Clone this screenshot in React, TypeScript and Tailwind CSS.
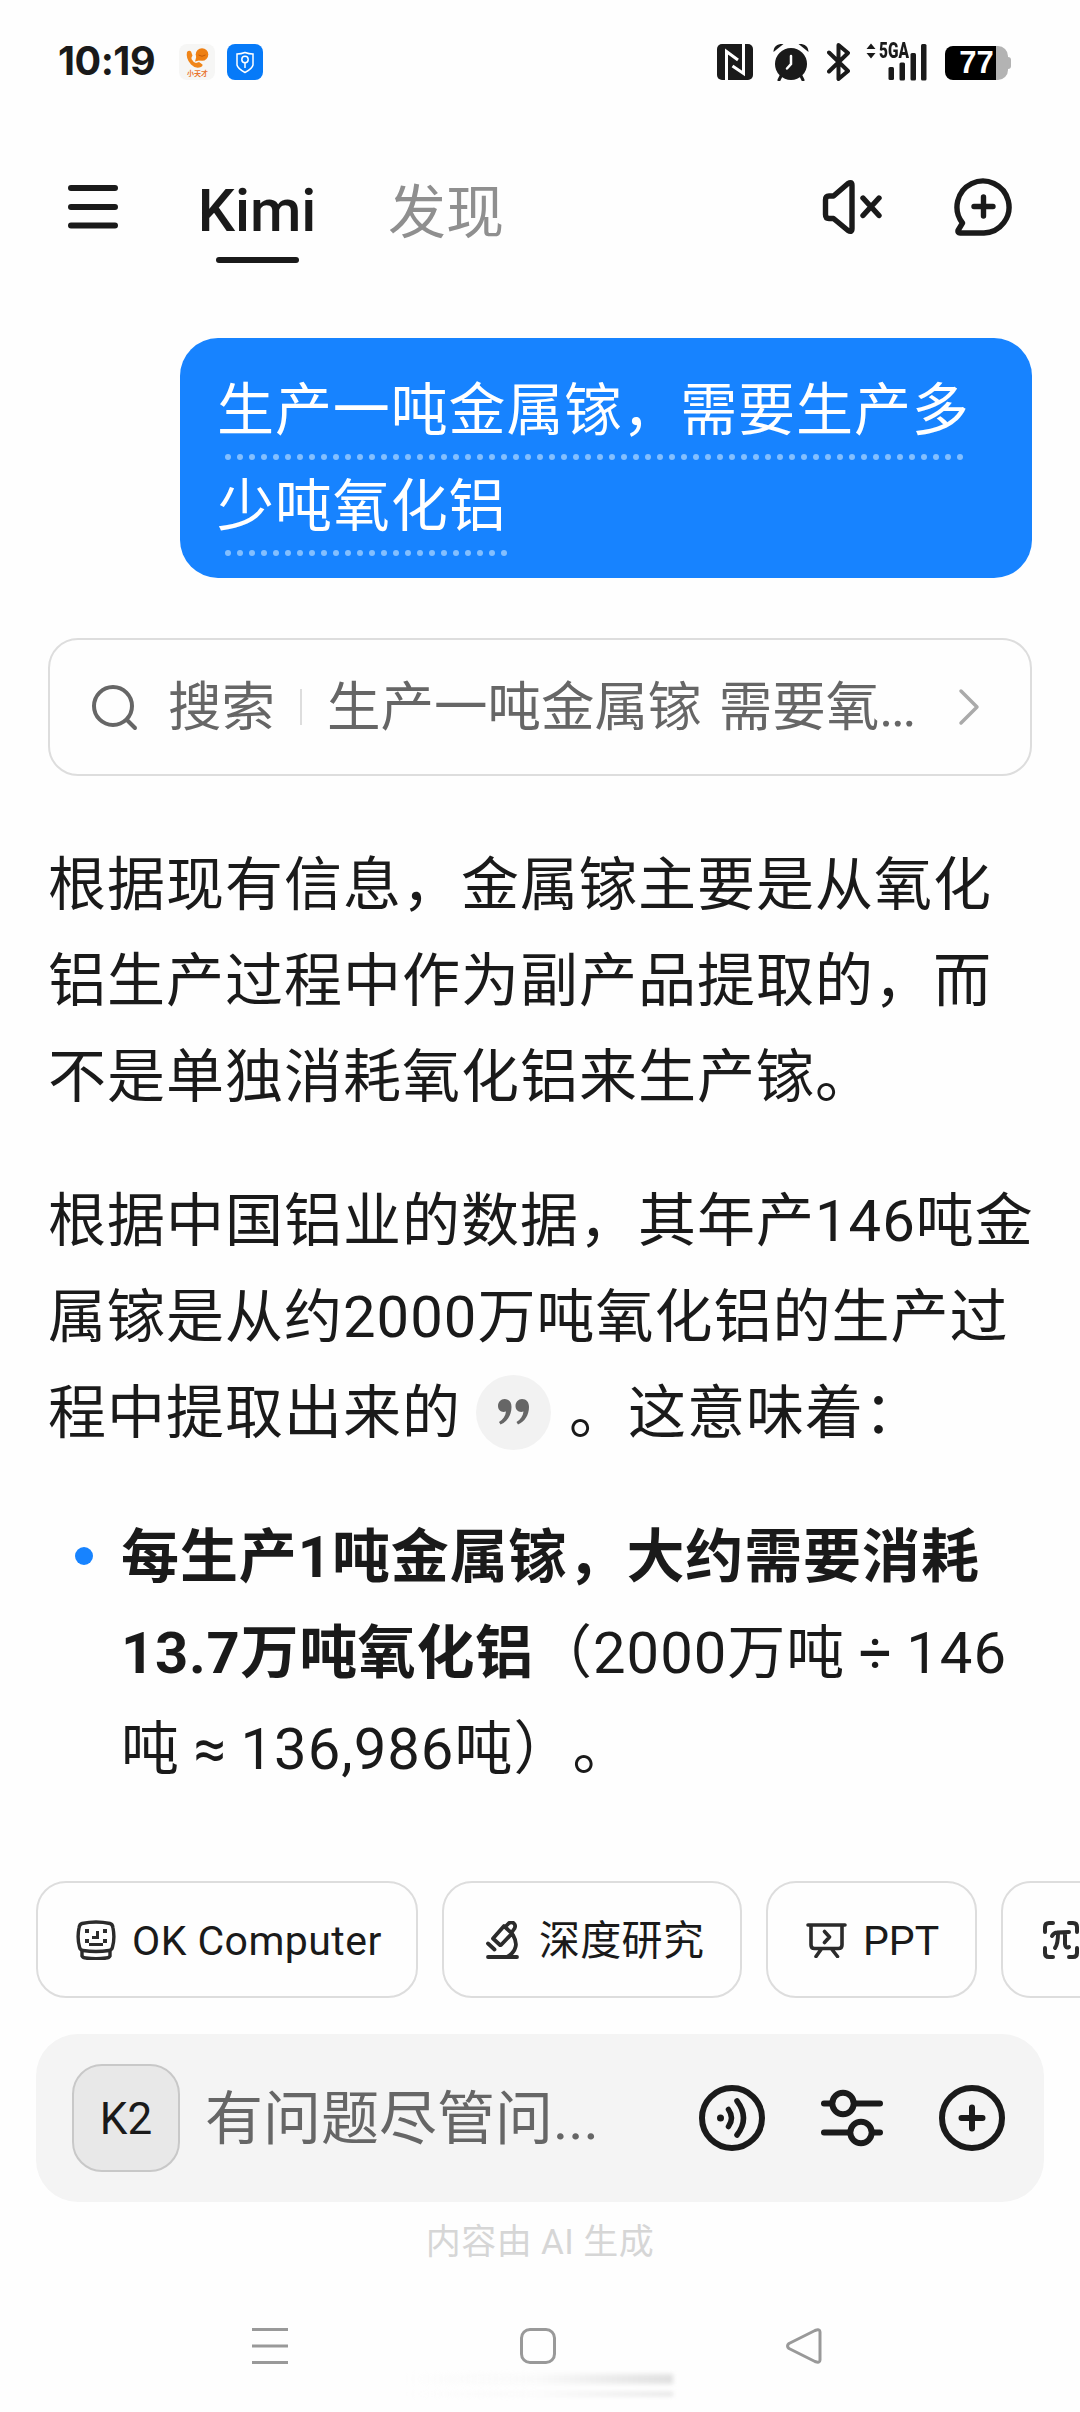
import type { ReactNode } from "react";

const FONT = "font-[Roboto,'Noto_Sans_CJK_SC',sans-serif]";

function Line({ children, className = "" }: { children: ReactNode; className?: string }) {
  return <div className={`flex h-24 items-center whitespace-pre pt-[4px] ${className}`}>{children}</div>;
}

function DotRow({ count }: { count: number }) {
  return (
    <div className="-mt-[4px] ml-[8px] flex h-[4px] items-start gap-[6px]">
      {Array.from({ length: count }, (_, i) => (
        <span key={i} className="mt-px size-[6px] shrink-0 rounded-full bg-[#83bfff]" />
      ))}
    </div>
  );
}

function StatusBar() {
  return (
    <div className="flex h-[124px] items-center pl-[58px] pr-[69px]">
      <span className="w-[121px] font-['Inter'] text-[39.5px] font-bold tracking-[-0.5px] text-[#1a1a1a]">10:19</span>
      <svg className="size-9" viewBox="0 0 36 36">
        <rect width="36" height="36" rx="8" fill="#f6f6f5" />
        <path d="M8 8Q10 6 12 7.500L13.500 11.500Q12 13.500 12.500 15Q14 18 17 19L20 18L23.500 20.500Q24 22 22 23Q17 25.500 12 20.500Q6.500 14.500 8 8Z" fill="#f08519" />
        <circle cx="23" cy="10.500" r="6.300" fill="#ee7f12" />
        <path d="M17.500 12L16 17.500L22 16Z" fill="#ee7f12" />
        <path d="M19.500 11q3.500 2.500 7 0" stroke="#c45c08" fill="none" />
        <text x="8" y="31.500" fontSize="7" fontWeight="700" fill="#e9752f" fontFamily="Noto Sans CJK SC">小天才</text>
      </svg>
      <svg className="ml-3 size-9" viewBox="0 0 36 36" fill="none" stroke="#fff" strokeWidth="1.500">
        <rect width="36" height="36" rx="8" fill="#067af8" stroke="none" />
        <path d="M18 8.500q4 1.500 8 1.500v11q-1 4-8 7.500-7-3.500-8-7.500v-11q4 0 8-1.500z" />
        <circle cx="18" cy="15.500" r="3.200" />
        <path d="M18 19v5" />
      </svg>
      <svg className="ml-auto size-9" viewBox="0 0 36 36" fill="none" stroke="#fff" strokeWidth="3">
        <rect width="36" height="36" rx="5" fill="#1a1a1a" stroke="none" />
        <path d="M9.500 36V7.500l11.500 8.500" />
        <path d="M26.500 0v29.500L15.500 22" />
      </svg>
      <svg className="ml-5 h-[38px] w-9" viewBox="0 0 36 38">
        <circle cx="18" cy="21" r="16" fill="#1a1a1a" />
        <path d="M8 33l-2 4M28 33l2 4" stroke="#1a1a1a" strokeWidth="3" strokeLinecap="round" />
        <path d="M.5 9C.5 3 5 .5 10.500 1zM35.500 9C35.500 3 31 .5 25.500 1z" fill="#1a1a1a" />
        <path d="M18 13v8l-4 4.500" stroke="#fff" strokeWidth="2.500" fill="none" strokeLinecap="round" />
      </svg>
      <svg className="ml-[18px] h-[38px] w-[23px]" viewBox="0 0 23 38" fill="none" stroke="#1a1a1a" strokeWidth="4" strokeLinecap="round" strokeLinejoin="round">
        <path d="M2 9.500l19 18.500-9.500 8V2L21 10 2 28.500" />
      </svg>
      <div className="relative ml-4 h-[38px] w-[63px]">
        <svg className="h-[38px] w-[63px]" viewBox="0 0 63 38" fill="#1a1a1a">
          <path d="M.5 6L5 .5 9.500 6zM.5 10h9L5 15.500z" />
          <rect x="22.500" y="24" width="5.500" height="13" rx="1.500" />
          <rect x="33.500" y="19.500" width="5.500" height="18" rx="1.500" />
          <rect x="44.500" y="10" width="5.500" height="27.500" rx="1.500" />
          <rect x="55" y="1" width="5.500" height="36.500" rx="1.500" />
        </svg>
        <span className="absolute left-[13px] top-[-4px] origin-left scale-x-[0.7] text-[22px] font-black leading-6 text-[#1a1a1a]">5GA</span>
      </div>
      <div className="ml-[16px] flex h-[34px] items-center pt-px">
        <div className="flex h-[34px] w-[51px] items-center justify-center rounded-l-[8px] bg-black pl-3 font-['Liberation_Sans'] text-[31px] font-bold leading-none text-white">77</div>
        <div className="h-[34px] w-3 rounded-r-[10px] bg-[#b3b3b3]" />
        <div className="h-3 w-[3px] rounded-r-[3px] bg-[#b3b3b3]" />
      </div>
    </div>
  );
}

function Header() {
  return (
    <div className="flex h-[166px] items-start pl-[68px] pr-[67px] pt-[54px]">
      <svg className="mt-[7px] h-[44px] w-[50px]" viewBox="0 0 50 44" stroke="#1a1a1a" strokeWidth="6" strokeLinecap="round">
        <path d="M3 3h44M3 22h44M3 40.500h44" />
      </svg>
      <div className="ml-[80px] flex w-[118px] flex-col items-center">
        <span className="h-[79px] text-[59px] font-medium leading-[65px] text-[#1a1a1a]">Kimi</span>
        <span className="h-[6px] w-[83px] rounded-full bg-[#1a1a1a]" />
      </div>
      <span className="ml-[72px] mt-[3px] text-[58px] leading-[64px] text-[#8f8f8f]">发现</span>
      <svg className="ml-auto h-[58px] w-[60px]" viewBox="0 0 60 58" fill="none" stroke="#1a1a1a" strokeWidth="5.400" strokeLinecap="round" strokeLinejoin="round">
        <path d="M3.500 22Q3.500 18 7 18H11.500L26 5.500Q30 3 30 7.500V50.500Q30 55 26 52.500L11.500 40.500H7Q3.500 40.500 3.500 36.500Z" />
        <path d="M41 20l16 17.500M57 20L41 37.500" />
      </svg>
      <svg className="-mt-px ml-[72px] size-[59px]" viewBox="0 0 59 59" fill="none" stroke="#1a1a1a" strokeWidth="5.400" strokeLinecap="round" strokeLinejoin="round">
        <path d="M8.500 46A26 26 0 1 1 30 56H6Q3.500 56 4 53.500Z" />
        <path d="M29.500 20v19M20 29.500h19" />
      </svg>
    </div>
  );
}

function Chip({ icon, label, className }: { icon: ReactNode; label?: string; className: string }) {
  return (
    <div className={`flex h-[117px] shrink-0 items-center rounded-[30px] border-2 border-[#dddddd] text-[41px] text-[#1a1a1a] ${className}`}>
      {icon}
      {label && <span className="whitespace-nowrap pt-[5px]">{label}</span>}
    </div>
  );
}

const ink = { fill: "none", stroke: "#2b2b2b", strokeWidth: 3.4, strokeLinecap: "round", strokeLinejoin: "round" } as const;

function Chips() {
  return (
    <div className="flex gap-6 overflow-hidden pl-9">
      <Chip
        className="w-[382px] pl-[38px] tracking-[0.45px]"
        label="OK Computer"
        icon={
          <svg className="mr-4 h-10 w-10" viewBox="0 0 40 40" {...ink}>
            <path d="M6 3.500Q20 .5 34 3.500Q36.500 4 37 8Q39 18 36.500 27Q36 30 33 30.500Q20 32.500 7 30.500Q4 30 3.500 27Q1 18 3 8Q3.500 4 6 3.500Z" />
            <path d="M6 31V36Q7 38 10 38Q20 39.500 30 38Q33 38 34 36V31" />
            <path d="M9 9h4v4H9zM27 9h4v4h-4zM20 11h3v8h-7v-3h4zM9 19h4v4H9zM27 19h4v4h-4zM13 23h14v3H13z" fill="#2b2b2b" stroke="none" />
          </svg>
        }
      />
      <Chip
        className="w-[300px] pl-[42px] tracking-[0.3px]"
        label="深度研究"
        icon={
          <svg className="mr-[20px] h-[38px] w-[33px]" viewBox="0 0 33 38" {...ink} strokeWidth={3.8}>
            <path d="M2 36h29M2 22.500l6.500 6M14 24l-7-6.500L18 5l8 7.500L15 24zM20 5l3-3q3-1.500 5 .5t.5 5L26 11M27 14q4 7 2.500 12-1.500 6-8.500 10" />
          </svg>
        }
      />
      <Chip
        className="w-[211px] pl-[38px]"
        label="PPT"
        icon={
          <svg className="mr-[16px] h-[36px] w-[41px]" viewBox="0 0 41 36" {...ink} strokeWidth={3.6}>
            <path d="M2 3h37M5 4v19q0 3.500 3.500 3.500h24Q36 26.500 36 23V4M15 27.500l-5 7M26 27.500l5.500 7M18.500 9.500l5 5.500-5 5.500" />
          </svg>
        }
      />
      <Chip
        className="w-[300px] pl-[40px]"
        icon={
          <svg className="h-[38px] w-9" viewBox="0 0 36 38" {...ink} strokeWidth={4}>
            <path d="M2 11V6q0-4 4-4h4M26 2h4q4 0 4 4v5M2 27v5q0 4 4 4h4M26 36h4q4 0 4-4v-5" />
            <path d="M9 15q2-3.500 5-3.500L26 11M15 12q0 11-3 15M22 12v11q.5 5 4 3" />
          </svg>
        }
      />
    </div>
  );
}

function Composer() {
  return (
    <div className="mx-9 mt-9 flex h-[168px] items-center rounded-[42px] bg-[#f4f4f4] pl-9 pr-[39px]">
      <div className="flex size-[108px] items-center justify-center rounded-[30px] border-2 border-[#c8c8c8] bg-[#e8e8e8] pt-[2px] text-[44px] text-[#1a1a1a]">K2</div>
      <span className="ml-[25px] pt-[3px] text-[58px] text-[#666666]">有问题尽管问...</span>
      <svg className="ml-auto size-[66px]" viewBox="0 0 66 66" fill="none" stroke="#1a1a1a" strokeWidth="6" strokeLinecap="round">
        <circle cx="33" cy="33" r="30" />
        <circle cx="21.500" cy="33" r="3.500" fill="#1a1a1a" stroke="none" />
        <path d="M29.500 24.500q6 8.500 0 17M38 16q13 17 0 34" strokeWidth="5.500" />
      </svg>
      <svg className="ml-[55px] h-[58px] w-[64px]" viewBox="0 0 64 58" fill="none" stroke="#1a1a1a" strokeWidth="6" strokeLinecap="round">
        <path d="M4 14.500h56M4 43.500h56" />
        <circle cx="23" cy="14.500" r="10.700" fill="#f4f4f4" />
        <circle cx="41" cy="43.500" r="10.700" fill="#f4f4f4" />
      </svg>
      <svg className="ml-[55px] size-[66px]" viewBox="0 0 66 66" fill="none" stroke="#1a1a1a" strokeWidth="6" strokeLinecap="round">
        <circle cx="33" cy="33" r="30" />
        <path d="M33 22.500v21M22.500 33h21" />
      </svg>
    </div>
  );
}

function NavBar() {
  return (
    <div className="mt-[66px] flex h-9 items-center pl-[252px]">
      <svg className="h-9 w-9" viewBox="0 0 36 36" stroke="#999" strokeWidth="3">
        <path d="M0 1.500h36M0 18h36M0 34.500h36" />
      </svg>
      <div className="ml-[232px] size-9 rounded-[10px] border-[3px] border-[#999999]" />
      <svg className="ml-[230px] h-9 w-9" viewBox="0 0 36 36" fill="none" stroke="#999" strokeWidth="3" strokeLinejoin="round">
        <path d="M3 15.500L29 2.500Q34 .5 34 4V32Q34 35.500 29 33.500L3 20.500Q0 18 3 15.500Z" />
      </svg>
    </div>
  );
}

export default function App() {
  return (
    <div className={`flex h-[2412px] w-[1080px] flex-col overflow-hidden bg-[#fefefe] [text-spacing-trim:space-all] ${FONT}`}>
      <StatusBar />
      <Header />
      <div className="ml-[180px] mt-12 h-[240px] w-[852px] rounded-[38px] bg-[#1783ff] pl-[37px] pt-[23px] text-[57px] tracking-[0.9px] text-white">
        <Line>生产一吨金属镓，需要生产多</Line>
        <DotRow count={62} />
        <Line>少吨氧化铝</Line>
        <DotRow count={24} />
      </div>

      <div className="mx-12 mt-[60px] flex h-[138px] items-center rounded-[30px] border-2 border-[#dddddd] pl-[41px] text-[53.5px] text-[#666666]">
        <svg className="size-[47px]" viewBox="0 0 47 47" fill="none" stroke="#666" strokeWidth="4" strokeLinecap="round">
          <circle cx="22" cy="22" r="19" />
          <path d="M36 36l8 8" />
        </svg>
        <span className="ml-[30px] whitespace-pre pt-[3px]">搜索</span>
        <span className="ml-[25px] h-9 w-0.5 bg-[#dddddd]" />
        <span className="ml-[25px] w-[588px] whitespace-pre pt-[3px] [word-spacing:4px]">
          生产一吨金属镓 需要氧<span className="tracking-[-2.5px]">...</span>
        </span>
        <svg className="ml-[43px] h-[38px] w-[22px]" viewBox="0 0 22 38" fill="none" stroke="#aaa" strokeWidth="3.500" strokeLinecap="round" strokeLinejoin="round">
          <path d="M3 3l16 16L3 35" />
        </svg>
      </div>

      <div className="mt-[59px] flex flex-col gap-12 text-[58px] tracking-[1px] text-[#1a1a1a]">
        <div className="pl-12">
          <Line>根据现有信息，金属镓主要是从氧化</Line>
          <Line>铝生产过程中作为副产品提取的，而</Line>
          <Line>不是单独消耗氧化铝来生产镓。</Line>
        </div>
        <div className="pl-12">
          <Line>根据中国铝业的数据，其年产146吨金</Line>
          <Line>属镓是从约2000万吨氧化铝的生产过</Line>
          <Line>
            <span>程中提取出来的</span>
            <span className="-mt-[2px] ml-[15px] mr-[18px] flex size-[75px] items-center justify-center rounded-full bg-[#f2f2f2]">
              <svg className="h-[26px] w-[31px]" viewBox="0 0 31 26" fill="#666">
                <path d="M6.500 0C11 0 13.500 3 13.500 8C13.500 16 9 23 2.500 25.500L1 23C5 20.500 7.500 17 8 12.500C4 14 0 11.500 0 7C0 3 3 0 6.500 0ZM24 0C28.500 0 31 3 31 8C31 16 26.500 23 20 25.500L18.500 23C22.500 20.500 25 17 25.500 12.500C21.500 14 17.500 11.500 17.500 7C17.500 3 20.500 0 24 0Z" />
              </svg>
            </span>
            <span>。这意味着：</span>
          </Line>
        </div>
        <div className="flex pl-[75px] [word-spacing:-2px]">
          <span className="mt-10 size-[18px] rounded-full bg-[#1783ff]" />
          <div className="ml-[28px]">
            <Line className="font-bold tracking-[0.9px]">每生产1吨金属镓，大约需要消耗</Line>
            <Line>
              <span className="font-bold tracking-[0.7px]">13.7万吨氧化铝</span>
              <span>（2000万吨 ÷ 146</span>
            </Line>
            <Line>吨 ≈ 136,986吨）。</Line>
          </div>
        </div>
      </div>

      <div className="mt-[86px]">
        <Chips />
      </div>
      <Composer />
      <div className="mt-[20px] flex h-10 items-center justify-center pt-[2px] text-[35px] tracking-[0.4px] text-[#d6d6d6]">内容由 AI 生成</div>
      <NavBar />
      <div className="ml-[398px] mt-[10px] flex h-[28px] w-[275px] flex-col gap-2 blur-[2px]">
        <div className="h-2.5 bg-linear-to-r from-transparent via-[#fafafa] to-[#e0e0e0]" />
        <div className="h-1 bg-linear-to-r from-transparent via-[#fafafa] to-[#e2e2e2]" />
      </div>
    </div>
  );
}
